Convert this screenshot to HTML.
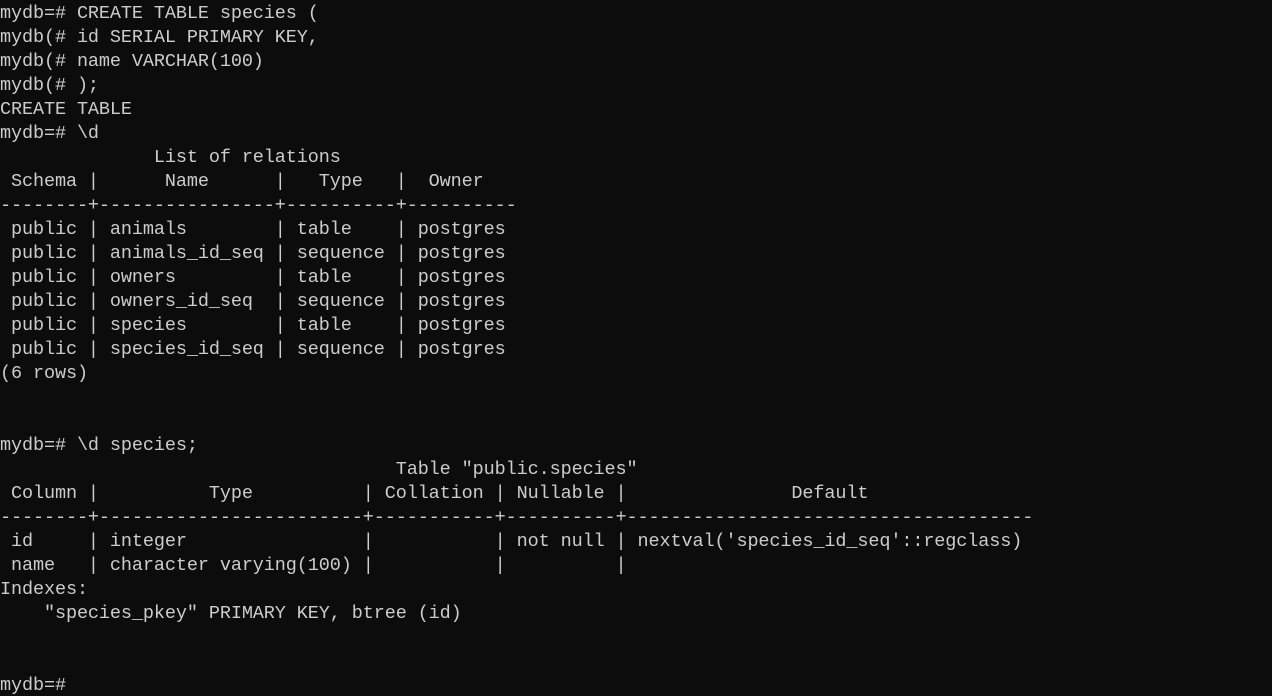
<!DOCTYPE html>
<html><head><meta charset="utf-8"><style>
html,body{margin:0;padding:0;background:#0c0c0c;width:1272px;height:696px;overflow:hidden}
pre{margin:0;padding:2px 0 0 0;font-family:"Liberation Mono",monospace;font-size:18.5px;letter-spacing:-0.11px;line-height:24px;color:#cccccc;white-space:pre}
</style></head><body><pre>mydb=# CREATE TABLE species (
mydb(# id SERIAL PRIMARY KEY,
mydb(# name VARCHAR(100)
mydb(# );
CREATE TABLE
mydb=# \d
              List of relations
 Schema |      Name      |   Type   |  Owner
--------+----------------+----------+----------
 public | animals        | table    | postgres
 public | animals_id_seq | sequence | postgres
 public | owners         | table    | postgres
 public | owners_id_seq  | sequence | postgres
 public | species        | table    | postgres
 public | species_id_seq | sequence | postgres
(6 rows)


mydb=# \d species;
                                    Table "public.species"
 Column |          Type          | Collation | Nullable |               Default
--------+------------------------+-----------+----------+-------------------------------------
 id     | integer                |           | not null | nextval('species_id_seq'::regclass)
 name   | character varying(100) |           |          |
Indexes:
    "species_pkey" PRIMARY KEY, btree (id)


mydb=# </pre></body></html>
